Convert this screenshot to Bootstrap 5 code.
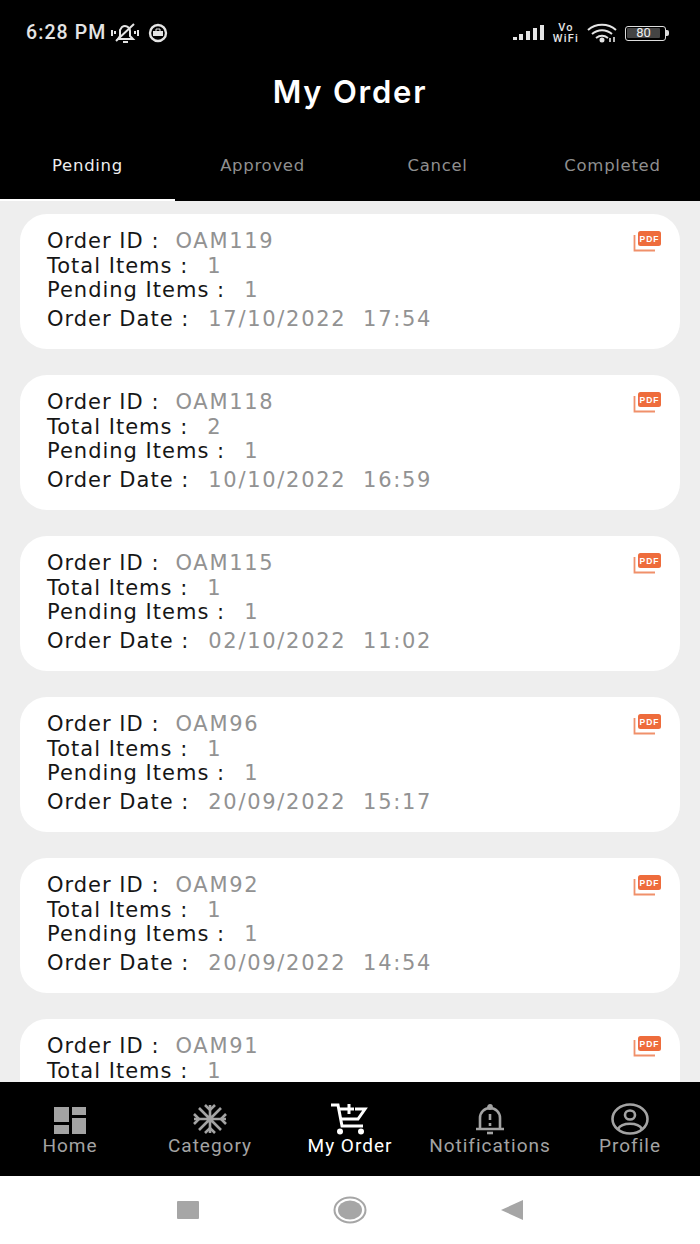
<!DOCTYPE html>
<html lang="en">
<head>
  <meta charset="UTF-8">
  <meta name="viewport" content="width=device-width, initial-scale=1.0">
  <title>My Order</title>
  <link href="https://cdn.jsdelivr.net/npm/bootstrap@5.3.0/dist/css/bootstrap.min.css" rel="stylesheet">
  <style>
    html, body { height: 1244px; overflow: hidden; }
    body { background: #fff; font-family: "DejaVu Sans", sans-serif; }
    .app-shell { height: 1244px; }
    .top-head { background: #000; height: 201px; flex: none; color: #fff; }
    .status-row { height: 66px; padding: 0 31px 0 26px; color: #e4e4e4; }
    .status-time { font-family: "Roboto", sans-serif; font-size: 19.5px; font-weight: 500; line-height: 1; letter-spacing: 1.1px; }
    .vo-label { font-family: "Roboto", sans-serif; font-size: 11px; line-height: 11px; font-weight: 500; letter-spacing: 1.2px; }
    .batt-box { width: 41px; height: 15px; border: 1.5px solid #ddd; border-radius: 3px; padding: 1px; }
    .batt-fill { font-family: "Roboto", sans-serif; font-size: 13px; line-height: 10px; height: 10px; width: 33px; background: #444; color: #eee; text-align: center; border-radius: 1px; }
    .batt-tip { width: 3px; height: 6px; background: #ddd; border-radius: 0 2px 2px 0; }
    .page-title { font-family: "Inter", sans-serif; font-size: 31px; font-weight: 600; line-height: 1; height: 66px; padding-top: 10px; letter-spacing: 1.8px; }
    .tab-row { height: 69px; }
    .tab-item { flex: 1 1 0; text-align: center; font-size: 16.5px; color: #8f8f8f; padding-top: 22px; letter-spacing: .7px; line-height: 24px; }
    .tab-item.on { color: #eee; border-bottom: 2px solid #fff; }
    .order-area { background: #eeeeee; flex: 1 1 0; min-height: 0; overflow: hidden; padding: 13px 20px 0; }
    .order-tile { background: #fff; border-radius: 27px; height: 135px; margin-bottom: 26px; padding: 15px 19px 0 27px; font-size: 21px; color: #161616; letter-spacing: 1px; }
    .order-line { line-height: 24.5px; height: 24.5px; white-space: nowrap; }
    .order-line.last { margin-top: 4px; }
    .order-val { color: #929292; margin-left: 19px; letter-spacing: 1.7px; }
    .order-line:first-child .order-val { margin-left: 16px; }
    .pdf-mark { margin-top: 2px; }
    .bottom-tabs { background: #000; height: 94px; flex: none; }
    .bottom-item { flex: 1 1 0; text-align: center; color: #a3a3a3; font-family: "Roboto", sans-serif; font-size: 19px; letter-spacing: 1px; line-height: 22px; padding-top: 21px; }
    .bottom-item.on { color: #fff; }
    .bottom-item svg { display: block; margin: 0 auto; height: 32px; }
    .sys-nav { height: 68px; flex: none; background: #fff; }
    .sys-btn { width: 162px; height: 68px; }
  </style>
</head>
<body>
  <div class="app-shell d-flex flex-column">
    <div class="top-head">
      <div class="status-row d-flex align-items-center justify-content-between">
        <div class="d-flex align-items-center">
          <span class="status-time">6:28 PM</span>
          <svg class="ms-1" width="30" height="22" viewBox="0 0 30 22" fill="none" stroke="#e4e4e4" stroke-width="2">
            <path d="M8 17h15l-3-3V9a5 5 0 0 0-8-4l-2 3v6z"/><path d="M13 20h5"/><path d="M6 19 24 2"/><path d="M2 8v6M5 9v3M28 8v6M25 9v3"/>
          </svg>
          <svg class="ms-2" width="20" height="20" viewBox="0 0 20 20">
            <circle cx="10" cy="10" r="8" fill="none" stroke="#e4e4e4" stroke-width="2.4"/><rect x="5" y="8" width="10" height="5" fill="#e4e4e4"/><path d="M8 8V6h4v2" fill="none" stroke="#e4e4e4"/>
          </svg>
        </div>
        <div class="d-flex align-items-center gap-2">
          <svg width="32" height="16" viewBox="0 0 32 16" fill="#e4e4e4">
            <rect x="0" y="12" width="4" height="3"/><rect x="6" y="9" width="4" height="6"/><rect x="13" y="6" width="4" height="9"/><rect x="20" y="3" width="4" height="12"/><rect x="27" y="0" width="4" height="15"/>
          </svg>
          <div class="vo-label text-center">Vo<br>WiFi</div>
          <svg width="30" height="20" viewBox="0 0 30 20" fill="none" stroke="#e4e4e4" stroke-width="2">
            <path d="M1 7c8-7 20-7 28 0"/><path d="M5 11c6-5 14-5 20 0"/><path d="M9 15c4-3 8-3 12 0"/><circle cx="15" cy="17" r="1.5" fill="#e4e4e4"/><path d="M23 15v4M27 14v5" stroke-width="1.6"/>
          </svg>
          <div class="d-flex align-items-center">
            <div class="batt-box"><div class="batt-fill">80</div></div>
            <div class="batt-tip"></div>
          </div>
        </div>
      </div>
      <div class="page-title text-center">My Order</div>
      <div class="tab-row d-flex">
        <div class="tab-item on">Pending</div>
        <div class="tab-item">Approved</div>
        <div class="tab-item">Cancel</div>
        <div class="tab-item">Completed</div>
      </div>
    </div>

    <div class="order-area" id="orderList"></div>

    <div class="bottom-tabs d-flex">
      <div class="bottom-item">
        <svg width="34" height="32" viewBox="0 0 34 32" fill="#a3a3a3">
          <rect x="1" y="4" width="15" height="15"/><rect x="19" y="4" width="14" height="8"/><rect x="1" y="22" width="15" height="9"/><rect x="19" y="15" width="14" height="16"/>
        </svg>
        Home
      </div>
      <div class="bottom-item">
        <svg width="36" height="32" viewBox="0 0 36 32" fill="none" stroke="#a3a3a3" stroke-width="2.6">
          <path d="M18 2v28M2 16h32M7 5l22 22M29 5 7 27"/><path d="M13 2l5 5 5-5M13 30l5-5 5 5M2 11l5 5-5 5M34 11l-5 5 5 5"/>
        </svg>
        Category
      </div>
      <div class="bottom-item on">
        <svg width="38" height="32" viewBox="0 0 38 32" fill="none" stroke="#fff" stroke-width="3">
          <path d="M0 2h7l4 21h21"/><path d="M7 6h6M24 6h10l-7 10H9"/><path d="M18 1v10M13 6h10"/><circle cx="9" cy="28.5" r="3" fill="#fff" stroke="none"/><circle cx="30" cy="28.5" r="3" fill="#fff" stroke="none"/>
        </svg>
        My Order
      </div>
      <div class="bottom-item">
        <svg width="34" height="32" viewBox="0 0 34 32" fill="none" stroke="#a3a3a3" stroke-width="2.6">
          <path d="M3 26h28M7 26V15a10 10 0 0 1 20 0v11"/><circle cx="17" cy="4" r="1.6" fill="#a3a3a3"/><path d="M17 11v6M17 20v3"/><path d="M14 30h6"/>
        </svg>
        Notifications
      </div>
      <div class="bottom-item">
        <svg width="38" height="32" viewBox="0 0 38 32" fill="none" stroke="#a3a3a3" stroke-width="2.6">
          <ellipse cx="19" cy="16" rx="17.5" ry="14.5"/><ellipse cx="19" cy="12" rx="5" ry="4.5"/><path d="M7 26c4-7 20-7 24 0"/>
        </svg>
        Profile
      </div>
    </div>

    <div class="sys-nav d-flex justify-content-center align-items-center">
      <div class="sys-btn d-flex align-items-center justify-content-center">
        <svg width="22" height="18" viewBox="0 0 22 18"><rect width="22" height="18" rx="1" fill="#a6a6a6"/></svg>
      </div>
      <div class="sys-btn d-flex align-items-center justify-content-center">
        <svg width="34" height="28" viewBox="0 0 34 28"><ellipse cx="17" cy="14" rx="15.5" ry="12.5" fill="none" stroke="#a6a6a6" stroke-width="2"/><ellipse cx="17" cy="14" rx="12" ry="9.5" fill="#a6a6a6"/></svg>
      </div>
      <div class="sys-btn d-flex align-items-center justify-content-center">
        <svg width="22" height="20" viewBox="0 0 22 20"><path d="M0 10 22 0v20z" fill="#a6a6a6"/></svg>
      </div>
    </div>
  </div>

  <script>
    const orders = [
      { id: 'OAM119', total: 1, pending: 1, date: '17/10/2022', time: '17:54' },
      { id: 'OAM118', total: 2, pending: 1, date: '10/10/2022', time: '16:59' },
      { id: 'OAM115', total: 1, pending: 1, date: '02/10/2022', time: '11:02' },
      { id: 'OAM96', total: 1, pending: 1, date: '20/09/2022', time: '15:17' },
      { id: 'OAM92', total: 1, pending: 1, date: '20/09/2022', time: '14:54' },
      { id: 'OAM91', total: 1 }
    ];

    const pdfIcon = `<svg class="pdf-mark" width="28" height="21" viewBox="0 0 28 21">
      <path d="M1.5 4v15.5H22" fill="none" stroke="#f0906a" stroke-width="1.8"/>
      <rect x="5" y="0" width="23" height="15" rx="2.5" fill="#ee6c3c"/>
      <text x="16.5" y="11" text-anchor="middle" font-family="Liberation Sans" font-size="8.5" font-weight="700" fill="#fff">PDF</text>
    </svg>`;

    // last tile runs under the bottom bar, only its first two rows show
    document.getElementById('orderList').innerHTML = orders.map(o => `
      <div class="order-tile d-flex justify-content-between align-items-start">
        <div>
          <div class="order-line">Order ID :<span class="order-val">${o.id}</span></div>
          <div class="order-line">Total Items :<span class="order-val">${o.total}</span></div>
          ${o.date ? `<div class="order-line">Pending Items :<span class="order-val">${o.pending}</span></div>
          <div class="order-line last">Order Date :<span class="order-val">${o.date}&nbsp;&nbsp;${o.time}</span></div>` : ''}
        </div>
        ${pdfIcon}
      </div>`).join('');
  </script>
  <script src="https://cdn.jsdelivr.net/npm/bootstrap@5.3.0/dist/js/bootstrap.bundle.min.js"></script>
</body>
</html>
